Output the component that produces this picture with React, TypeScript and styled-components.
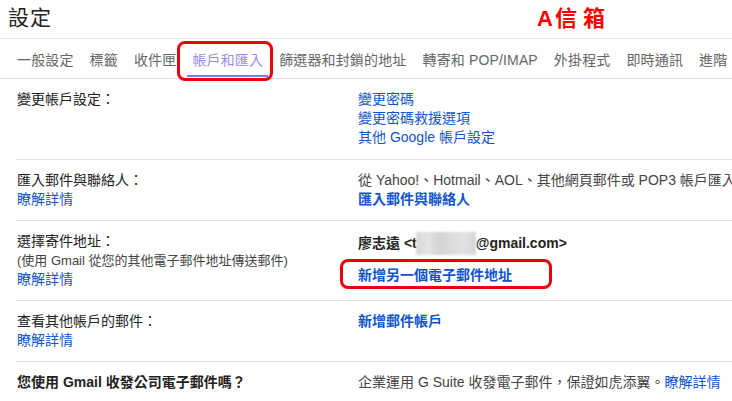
import React from "react";
import styled, { createGlobalStyle } from "styled-components";

const Global = createGlobalStyle`
  html, body { margin: 0; padding: 0; background: #fff; }
  body {
    font-family: "Liberation Sans", Arial, "Noto Sans CJK TC", sans-serif;
    font-size: 14px;
    color: #222;
    overflow: hidden;
  }
`;

const Page = styled.div`
  width: 732px;
  height: 401px;
  overflow: hidden;
  position: relative;
`;

const Header = styled.div`
  position: relative;
  height: 38px;
  display: flex;
  align-items: center;
  padding-left: 8px;
  border-bottom: 1px solid #ebebeb;
`;

const Title = styled.h1`
  margin: 0;
  font-size: 21px;
  font-weight: normal;
  color: #222;
  line-height: 1;
  letter-spacing: 1px;
  margin-top: -4px;
`;

const Stamp = styled.div`
  position: absolute;
  left: 537px;
  top: 7px;
  color: #f00;
  font-weight: bold;
  font-size: 22px;
  line-height: 24px;
  display: flex;
  gap: 2px;
`;

const StampWords = styled.span`
  letter-spacing: 6px;
`;

const TabBar = styled.div`
  display: flex;
  height: 39px;
  padding-left: 9px;
  border-bottom: 1px solid #e3e3e3;
  white-space: nowrap;
`;

const Tab = styled.div<{ $active?: boolean }>`
  position: relative;
  display: flex;
  align-items: center;
  padding: 0 8px 0 8px;
  color: ${(p) => (p.$active ? "#9a8ce6" : "#666")};
  font-size: 14px;
  letter-spacing: 0.15px;
  &::after {
    content: "";
    display: ${(p) => (p.$active ? "block" : "none")};
    position: absolute;
    left: 3px;
    right: 3px;
    bottom: 1px;
    height: 2px;
    background: #5b8ef0;
  }
`;

const Marker = styled.div`
  position: absolute;
  pointer-events: none;
  border: 3px solid #e8000b;
  border-radius: 8px;
`;

const TabMarker = styled(Marker)`
  left: -7px;
  right: -2px;
  top: 2px;
  bottom: -3px;
`;

const Rows = styled.div`
  padding-left: 16px;
`;

const Row = styled.div<{ $last?: boolean; $first?: boolean }>`
  display: grid;
  grid-template-columns: 342px 1fr;
  padding: 11px 0 ${(p) => (p.$last ? "0" : p.$first ? "12px" : "11px")};
  border-bottom: ${(p) => (p.$last ? "none" : "1px solid #e2e2e2")};
  line-height: 19px;
  white-space: nowrap;
`;

const LabelCol = styled.div`
  display: flex;
  flex-direction: column;
  padding-left: 1px;
`;

const Label = styled.div<{ $bold?: boolean }>`
  color: #222;
  font-weight: ${(p) => (p.$bold ? "bold" : "normal")};
`;

const SubLabel = styled.div`
  color: #444;
  font-size: 13px;
`;

const ValueCol = styled.div`
  display: flex;
  flex-direction: column;
  align-items: flex-start;
  min-width: 0;
`;

const Text = styled.div`
  color: #444;
`;

const Link = styled.a<{ $bold?: boolean }>`
  color: #15c;
  text-decoration: none;
  font-weight: ${(p) => (p.$bold ? "bold" : "normal")};
  cursor: pointer;
`;

const Owner = styled.div`
  color: #222;
  font-weight: bold;
  display: flex;
  align-items: center;
`;

const Blur = styled.span`
  display: inline-block;
  width: 60px;
  height: 23px;
  margin: 0 0 0 -1px;
  background: linear-gradient(
    90deg,
    #d9d9d9 0%,
    #e4e4e4 20%,
    #d3d3d3 40%,
    #dcdcdc 60%,
    #e2e2e2 80%,
    #d6d6d6 100%
  );
  filter: blur(1px);
`;

const MarkedLine = styled.div`
  position: relative;
  margin-top: 11px;
`;

const LinkMarker = styled(Marker)`
  left: -18px;
  top: -7px;
  width: 206px;
  height: 24px;
`;

export default function App() {
  return (
    <Page>
      <Global />
      <Header>
        <Title>設定</Title>
        <Stamp>
          <span>A</span>
          <StampWords>信箱</StampWords>
        </Stamp>
      </Header>
      <TabBar>
        <Tab>一般設定</Tab>
        <Tab>標籤</Tab>
        <Tab>收件匣</Tab>
        <Tab $active>
          帳戶和匯入
          <TabMarker />
        </Tab>
        <Tab>篩選器和封鎖的地址</Tab>
        <Tab>轉寄和 POP/IMAP</Tab>
        <Tab>外掛程式</Tab>
        <Tab>即時通訊</Tab>
        <Tab>進階</Tab>
      </TabBar>
      <Rows>
        <Row $first>
          <LabelCol>
            <Label>變更帳戶設定：</Label>
          </LabelCol>
          <ValueCol>
            <Link>變更密碼</Link>
            <Link>變更密碼救援選項</Link>
            <Link>其他 Google 帳戶設定</Link>
          </ValueCol>
        </Row>
        <Row>
          <LabelCol>
            <Label>匯入郵件與聯絡人：</Label>
            <Link>瞭解詳情</Link>
          </LabelCol>
          <ValueCol>
            <Text>從 Yahoo!、Hotmail、AOL、其他網頁郵件或 POP3 帳戶匯入。</Text>
            <Link $bold>匯入郵件與聯絡人</Link>
          </ValueCol>
        </Row>
        <Row>
          <LabelCol>
            <Label>選擇寄件地址：</Label>
            <SubLabel>(使用 Gmail 從您的其他電子郵件地址傳送郵件)</SubLabel>
            <Link>瞭解詳情</Link>
          </LabelCol>
          <ValueCol>
            <Owner>
              廖志遠 &lt;t<Blur />@gmail.com&gt;
            </Owner>
            <MarkedLine>
              <Link $bold>新增另一個電子郵件地址</Link>
              <LinkMarker />
            </MarkedLine>
          </ValueCol>
        </Row>
        <Row>
          <LabelCol>
            <Label>查看其他帳戶的郵件：</Label>
            <Link>瞭解詳情</Link>
          </LabelCol>
          <ValueCol>
            <Link $bold>新增郵件帳戶</Link>
          </ValueCol>
        </Row>
        <Row $last>
          <LabelCol>
            <Label $bold>您使用 Gmail 收發公司電子郵件嗎？</Label>
          </LabelCol>
          <ValueCol>
            <Text>
              企業運用 G Suite 收發電子郵件，保證如虎添翼。<Link>瞭解詳情</Link>
            </Text>
          </ValueCol>
        </Row>
      </Rows>
    </Page>
  );
}
